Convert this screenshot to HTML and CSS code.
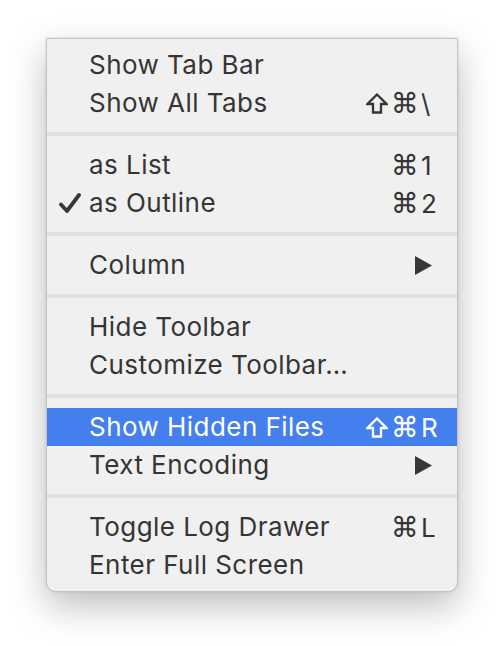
FILE: index.html
```html
<!DOCTYPE html>
<html>
<head>
<meta charset="utf-8">
<link rel="stylesheet" href="styles.css">
</head>
<body>
<div class="page">
  <div class="menu">
    <div class="item"><span class="check"></span><span class="label">Show Tab Bar</span></div>
    <div class="item"><span class="check"></span><span class="label">Show All Tabs</span><span class="sc"><span class="mods"><svg class="shift" width="22" height="21" viewBox="0 0 22 21"><path d="M11 1.5 L20.5 11 L15 11 L15 19.5 L7 19.5 L7 11 L1.5 11 Z" fill="none" stroke="currentColor" stroke-width="2.3" stroke-linejoin="miter"/></svg>⌘</span><span class="key">\</span></span></div>
    <div class="sep"></div>
    <div class="item"><span class="check"></span><span class="label">as List</span><span class="sc"><span class="mods">⌘</span><span class="key">1</span></span></div>
    <div class="item"><span class="check"><svg width="22" height="22" viewBox="0 0 22 22"><path d="M2 12.5 L8 19 L20 3" fill="none" stroke="#383838" stroke-width="3.8" stroke-linecap="round" stroke-linejoin="round"/></svg></span><span class="label">as Outline</span><span class="sc"><span class="mods">⌘</span><span class="key">2</span></span></div>
    <div class="sep"></div>
    <div class="item"><span class="check"></span><span class="label">Column</span><span class="sub"><svg width="17" height="19" viewBox="0 0 17 19"><polygon points="0,0 17,9.5 0,19" fill="#383838"/></svg></span></div>
    <div class="sep"></div>
    <div class="item"><span class="check"></span><span class="label">Hide Toolbar</span></div>
    <div class="item"><span class="check"></span><span class="label">Customize Toolbar…</span></div>
    <div class="sep"></div>
    <div class="item active"><span class="check"></span><span class="label">Show Hidden Files</span><span class="sc"><span class="mods"><svg class="shift" width="22" height="21" viewBox="0 0 22 21"><path d="M11 1.5 L20.5 11 L15 11 L15 19.5 L7 19.5 L7 11 L1.5 11 Z" fill="none" stroke="currentColor" stroke-width="2.3" stroke-linejoin="miter"/></svg>⌘</span><span class="key">R</span></span></div>
    <div class="item"><span class="check"></span><span class="label">Text Encoding</span><span class="sub"><svg width="17" height="19" viewBox="0 0 17 19"><polygon points="0,0 17,9.5 0,19" fill="#383838"/></svg></span></div>
    <div class="sep"></div>
    <div class="item"><span class="check"></span><span class="label">Toggle Log Drawer</span><span class="sc"><span class="mods">⌘</span><span class="key">L</span></span></div>
    <div class="item"><span class="check"></span><span class="label">Enter Full Screen</span></div>
  </div>
</div>
</body>
</html>
```

FILE: styles.css
```css
html, body {
  margin: 0;
  padding: 0;
  background: #ffffff;
}
.page {
  padding: 38px 0 60px 46px;
}
.menu {
  width: 410px;
  background: #f0f0f0;
  border: 1px solid #c3c3c3;
  border-radius: 0 0 10px 10px;
  box-shadow: 0 14px 36px rgba(0, 0, 0, 0.26), 0 0 3px rgba(0, 0, 0, 0.12);
  padding: 7px 0 7px 0;
  font-family: "Inter", "Noto Sans", sans-serif;
  font-size: 26px;
  letter-spacing: 0.45px;
  color: #353535;
}
.item {
  height: 38px;
  display: flex;
  align-items: center;
  padding: 0 14px 0 10px;
}
.item.active {
  background: #4380ed;
  color: #ffffff;
}
.check {
  width: 32px;
  display: flex;
  align-items: center;
  justify-content: flex-start;
  padding-left: 2px;
  box-sizing: border-box;
}
.label {
  flex: 1;
  white-space: nowrap;
  position: relative;
  top: -1px;
}
.sc {
  display: flex;
  align-items: center;
  white-space: nowrap;
}
.mods {
  display: flex;
  align-items: center;
  gap: 3px;
  font-family: "DejaVu Sans", sans-serif;
  font-size: 28px;
  letter-spacing: 0;
}
.shift {
  display: block;
}
.key {
  width: 22px;
  text-align: left;
  padding-left: 2px;
  letter-spacing: 0;
}
.sub {
  display: flex;
  align-items: center;
  padding-right: 11px;
}
.sep {
  height: 24px;
  display: flex;
  align-items: center;
}
.sep::before {
  content: "";
  display: block;
  width: 100%;
  height: 4px;
  background: #e1e1e0;
}
```
